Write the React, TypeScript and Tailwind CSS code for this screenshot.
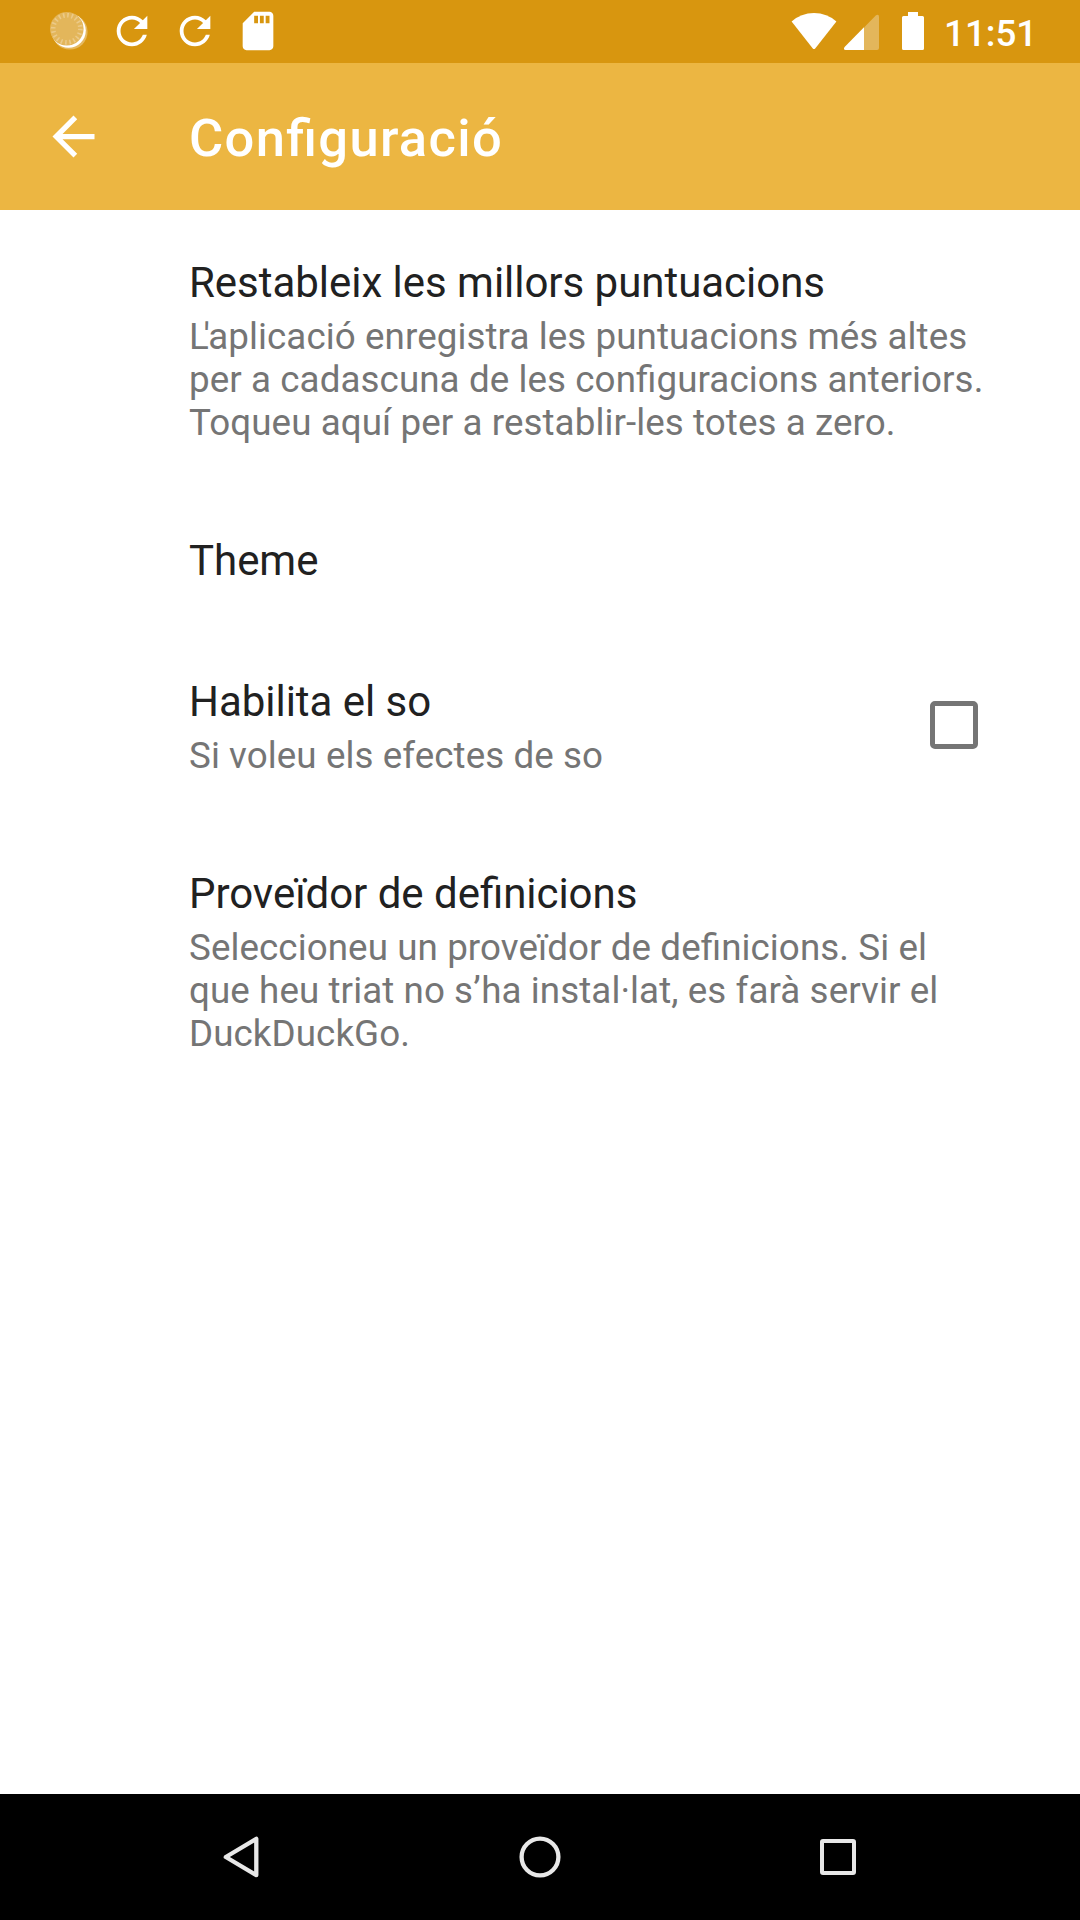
import React from "react";

function Pref({ title, lines }: { title: string; lines?: React.ReactNode[] }) {
  return (
    <div>
      <div className="whitespace-nowrap text-[42px] leading-[56px] tracking-[-0.03px] text-[#212121] [font-feature-settings:'liga']">{title}</div>
      {lines && (
        <div className="mt-1">
          {lines.map((l, i) => (
            <div key={i} className="whitespace-nowrap text-[36.75px] leading-[43px] tracking-[0.08px] text-[#757575] [font-feature-settings:'liga']">{l}</div>
          ))}
        </div>
      )}
    </div>
  );
}

const refresh = "M17.65 6.35C16.2 4.9 14.21 4 12 4c-4.42 0-7.99 3.58-7.99 8s3.57 8 7.99 8c3.73 0 6.84-2.55 7.73-6h-2.08c-.82 2.33-3.04 4-5.65 4-3.31 0-6-2.69-6-6s2.69-6 6-6c1.66 0 3.14.69 4.22 1.78L13 11h7V4l-2.35 2.35z";

function StatusBar() {
  return (
    <header className="flex h-[63px] shrink-0 items-start justify-between bg-[#d8960f] pl-[45.5px] pr-[47px] text-white">
      <div className="flex gap-[17px] pt-[8.4px]">
        <svg className="size-[46px]" viewBox="0 0 46 46">
          <circle cx="23.8" cy="23.8" r="17.8" fill="#e6b95f" />
          <circle cx="22.6" cy="22.6" r="17.2" fill="#fff" />
          <circle cx="20.8" cy="20.8" r="16.8" fill="#e3b65b" />
          <circle cx="20.8" cy="20.8" r="13.6" fill="none" stroke="#ecca88" strokeWidth="4.6" strokeDasharray="1.6 2.673" />
        </svg>
        <svg className="size-[46px]" viewBox="0 0 24 24" fill="currentColor"><path d={refresh} /></svg>
        <svg className="size-[46px]" viewBox="0 0 24 24" fill="currentColor"><path d={refresh} /></svg>
        <svg className="size-[46px]" viewBox="0 0 24 24" fill="currentColor"><path d="M18 2h-8L4.02 8 4 20c0 1.1.9 2 2 2h12c1.1 0 2-.9 2-2V4c0-1.1-.9-2-2-2zm-6 6h-2V4h2v4zm3 0h-2V4h2v4zm3 0h-2V4h2v4z" /></svg>
      </div>
      <div className="flex items-start">
        <svg className="h-[63px] w-[46px]" viewBox="791 0 46 63" fill="currentColor">
          <path d="M791.6 21.5Q801 13 814 13Q827 13 836.4 21.5L815.2 48.4Q814 49.8 812.8 48.4Z" />
        </svg>
        <svg className="ml-[7px] h-[63px] w-[36px]" viewBox="844 0 36 63">
          <path d="M876 15.3Q879 13.6 879 17V48Q879 50 877 50H864V27.5Z" fill="#e3b65b" />
          <path d="M864 27.3V50H845.5Q843 49.5 844.6 47Z" fill="#fff" />
        </svg>
        <svg className="ml-[22px] h-[63px] w-[22px]" viewBox="902 0 22 63" fill="currentColor">
          <path d="M908 12h10v4h4.5q1.5 0 1.5 1.5v31q0 1.5-1.5 1.5h-19q-1.5 0-1.5-1.5v-31q0-1.5 1.5-1.5h4.5z" />
        </svg>
        <span className="ml-[20px] mt-1 w-[89px] whitespace-nowrap text-[36.75px] font-medium leading-[60px]">11:51</span>
      </div>
    </header>
  );
}

export default function App() {
  return (
    <div className="flex h-[1920px] w-[1080px] flex-col overflow-hidden bg-white font-[Roboto,sans-serif]">
      <StatusBar />
      <div className="flex h-[147px] shrink-0 items-center bg-[#ecb642] pl-[42px] text-white">
        <svg className="size-[63px]" viewBox="0 0 24 24" fill="currentColor"><path d="M20 11H7.83l5.59-5.59L12 4l-8 8 8 8 1.41-1.41L7.83 13H20v-2z" /></svg>
        <h1 className="ml-[84px] pt-[3px] text-[52.5px] font-medium tracking-[1.33px] [font-feature-settings:'liga']">Configuració</h1>
      </div>
      <main className="flex flex-1 flex-col pl-[189px] pt-[45px]">
        <Pref
          title="Restableix les millors puntuacions"
          lines={[
            <><span className="tracking-[-5.2px]">L</span><span className="tracking-[-1.8px]">'</span>aplicació enregistra les puntuacions més altes</>,
            "per a cadascuna de les configuracions anteriors.",
            "Toqueu aquí per a restablir-les totes a zero.",
          ]}
        />
        <div className="mt-[89px]"><Pref title="Theme" /></div>
        <div className="mt-[85px] flex items-center justify-between pr-[102px]">
          <Pref title="Habilita el so" lines={["Si voleu els efectes de so"]} />
          <div role="checkbox" aria-checked="false" className="mb-[2px] size-[48px] rounded-[5px] border-[5px] border-[#757575]" />
        </div>
        <div className="mt-[89px]">
          <Pref
            title="Proveïdor de definicions"
            lines={["Seleccioneu un proveïdor de definicions. Si el", "que heu triat no s’ha instal·lat, es farà servir el", "DuckDuckGo."]}
          />
        </div>
      </main>
      <nav className="flex h-[126px] shrink-0 items-center justify-between bg-black px-[220px]">
        <svg className="size-[42px]" viewBox="0 0 42 42" fill="none" stroke="#e8e8e8" strokeWidth="4.3" strokeLinejoin="round"><path d="M36.3 2.8V39.200L5.800 21Z" /></svg>
        <svg className="size-[42px]" viewBox="0 0 42 42" fill="none" stroke="#e8e8e8" strokeWidth="4.3"><circle cx="21" cy="21" r="18.4" /></svg>
        <svg className="size-[42px]" viewBox="0 0 42 42" fill="none" stroke="#e8e8e8" strokeWidth="4"><rect x="4" y="5" width="32" height="32" rx="1" /></svg>
      </nav>
    </div>
  );
}
